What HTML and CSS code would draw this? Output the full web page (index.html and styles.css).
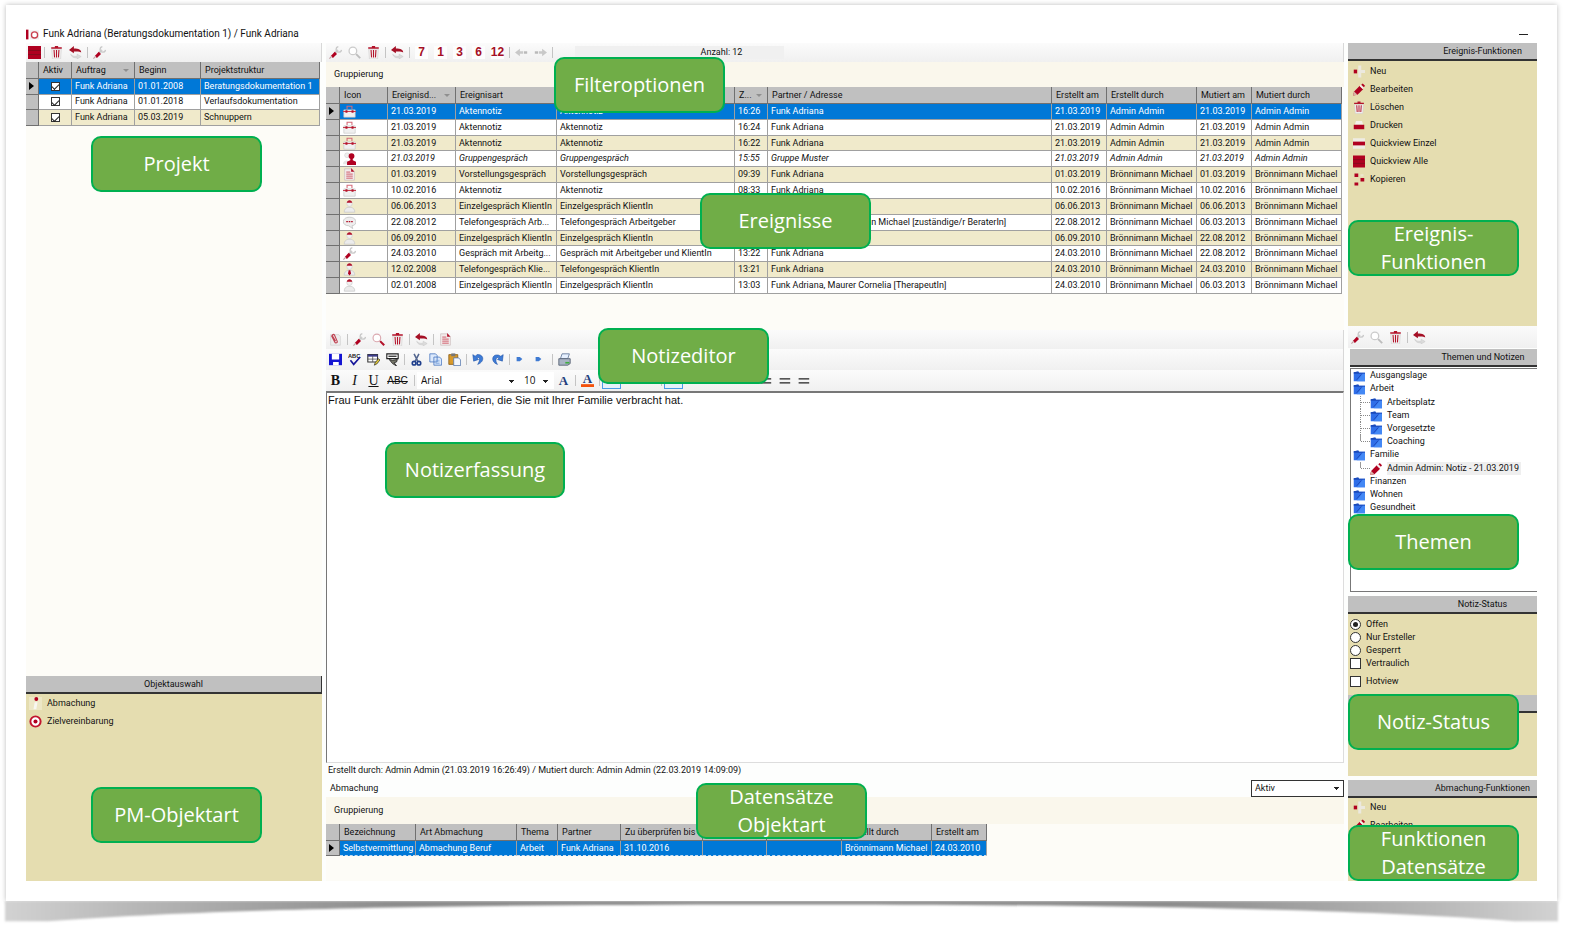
FILE: index.html
```html
<!DOCTYPE html>
<html lang="de">
<head>
<meta charset="utf-8">
<title>Funk Adriana (Beratungsdokumentation 1) / Funk Adriana</title>
<link rel="stylesheet" href="styles.css">
</head>
<body>
<svg class="defs" aria-hidden="true">
  <symbol id="i-list" viewBox="0 0 16 16"><path d="M0 0h16v16H0z" fill="#b00020"/><path d="M0 5.500h16M0 10.500h16" stroke="#7c0e1c" stroke-width="1"/></symbol>
  <symbol id="i-trash" viewBox="0 0 16 16"><path d="M2 4h12l-1 12H3z" fill="#f1eeee" stroke="#c9c9c9" stroke-width=".6"/><path d="M1.500 2.500h13M6 1h4" stroke="#b3122a" stroke-width="1.800"/><path d="M5 5l.6 9M8 5v9M11 5l-.6 9" stroke="#b3122a" stroke-width="1.300"/></symbol>
  <symbol id="i-undo" viewBox="0 0 16 16"><path d="M0 5l6-5v3c6 0 9 1.500 9 5C13 6.500 10 6.500 6 6.800V9z" fill="#a50f25"/><path d="M2 10c2 2.500 5 3 8 2.500V10l5 3-5 3v-1.500C6 15 3 13.500 2 10z" fill="#dcdcdc" stroke="#c2c2c2" stroke-width=".5"/></symbol>
  <symbol id="i-wrench" viewBox="0 0 16 16"><path d="M6 10l5-5" stroke="#cfcfcf" stroke-width="2.600"/><path d="M11.500 .8a3.400 3.400 0 1 0 4 4" fill="none" stroke="#c9c9c9" stroke-width="1.700"/><path d="M3.500 13.500l5-5" stroke="#b00020" stroke-width="3.800"/><path d="M.5 15.500l3-3" stroke="#c4a0a5" stroke-width="1.500"/></symbol>
  <symbol id="i-search" viewBox="0 0 16 16"><circle cx="6" cy="6" r="4.700" fill="#fff" stroke="#cbcbcb" stroke-width="1.600"/><path d="M10 10l5 5" stroke="#bdbdbd" stroke-width="2.300"/></symbol>
  <symbol id="i-search-red" viewBox="0 0 16 16"><circle cx="6" cy="6" r="4.700" fill="#fff" stroke="#dba9b0" stroke-width="1.400"/><path d="M10 10l5 5" stroke="#b3122a" stroke-width="2.600"/></symbol>
  <symbol id="i-left" viewBox="0 0 16 16"><path d="M0 8l6-4.500v3h4v3H6v3z" fill="#c8c8c8"/><path d="M11 6.500h4v3h-4z" fill="#b9b9b9"/></symbol>
  <symbol id="i-right" viewBox="0 0 16 16"><path d="M16 8l-6-4.500v3H6v3h4v3z" fill="#c8c8c8"/><path d="M1 6.500h4v3H1z" fill="#b9b9b9"/></symbol>
  <symbol id="i-case" viewBox="0 0 16 16"><path d="M1 6h14v9H1z" fill="#f0f0f0" stroke="#c6c6c6" stroke-width=".8"/><path d="M5 5V1.500h6V5" fill="none" stroke="#d56a78" stroke-width="1.300"/><path d="M0 8h16" stroke="#c93a4d" stroke-width="1.300"/><path d="M3 6.500h2.500v3H3zM10.500 6.500H13v3h-2.500z" fill="#b3122a"/></symbol>
  <symbol id="i-group" viewBox="0 0 16 16"><circle cx="5" cy="4" r="3" fill="#eee" stroke="#ccc" stroke-width=".6"/><path d="M0 15c0-6 8-6 9 0z" fill="#e6e6e6"/><circle cx="10.500" cy="5" r="3.600" fill="#b00020"/><path d="M9 7h3v3l4 2v4H5v-4l4-2z" fill="#b00020"/></symbol>
  <symbol id="i-doc" viewBox="0 0 16 16"><path d="M2 1h8.500L14 4.500V15H2z" fill="#f3ecec" stroke="#c9b9b9" stroke-width=".8"/><path d="M10 0l4 4.500h-4z" fill="#b3122a"/><path d="M4 5h5M4 7.500h8M4 10h8M4 12.500h8" stroke="#cf5a69" stroke-width="1.200"/></symbol>
  <symbol id="i-person" viewBox="0 0 16 16"><circle cx="8" cy="4.500" r="3.400" fill="#f1f1f1" stroke="#cecece" stroke-width=".8"/><path d="M4.600 3.500C5-.8 11-.8 11.400 3.500z" fill="#b3122a"/><path d="M1.500 15c0-4 2-5 4.500-6h4c2.500 1 4.500 2 4.500 6z" fill="#ececec" stroke="#c4c4c4" stroke-width=".8"/></symbol>
  <symbol id="i-tie" viewBox="0 0 16 16"><use href="#i-person"/><path d="M7 9h2l.8 4L8 15.500 6.200 13z" fill="#b00020"/></symbol>
  <symbol id="i-chat" viewBox="0 0 16 16"><path d="M8 1.500c10 0 10 10 3 10.500L12 15.500 7 12C-2 12-2 1.500 8 1.500z" fill="#eee" stroke="#c4c4c4" stroke-width="1"/><path d="M4 7h2M7 7h2M10 7h2" stroke="#b3122a" stroke-width="1.400"/></symbol>
  <symbol id="i-plus" viewBox="0 0 16 16"><path d="M7 0h4v6h5v4h-5v6H7z" fill="#ece9df"/><path d="M1 5.500h4.500v5H1z" fill="#b00020"/></symbol>
  <symbol id="i-pencil" viewBox="0 0 16 16"><path d="M0 16l1.500-5.500L9 3l4.500 4.500L6 15z" fill="#b00020"/><path d="M0 16l1.500-5.500 4.500 4.500z" fill="#d9b3a6"/><path d="M9.500 2.500l4 4" stroke="#f5f0f0" stroke-width="2"/><path d="M11 1.500L13 0l3 3-1.500 2z" fill="#b00020"/></symbol>
  <symbol id="i-print" viewBox="0 0 16 16"><path d="M4 2h8l1.500 5h-11z" fill="#f3f1ea"/><path d="M1 7h14v6H1z" fill="#b00020"/></symbol>
  <symbol id="i-single" viewBox="0 0 16 16"><path d="M0 1h16v14H0z" fill="#efece4"/><path d="M0 5.500h16v5H0z" fill="#b00020"/></symbol>
  <symbol id="i-copy" viewBox="0 0 16 16"><path d="M2 0h5v4.500H2zM10 6h5v4.500h-5zM2 12h5v4H2z" fill="#b00020"/><path d="M10 1h4v3h-4z" fill="#ece7cf"/></symbol>
  <symbol id="i-info" viewBox="0 0 16 16"><circle cx="9" cy="2.500" r="2.400" fill="#b00020"/><path d="M7 6.500h3.500L9 15H5.500z" fill="#f8f7f2"/></symbol>
  <symbol id="i-target" viewBox="0 0 16 16"><circle cx="8" cy="8" r="6.300" fill="#fff" stroke="#c2152e" stroke-width="2.400"/><circle cx="8" cy="8" r="2.500" fill="#b00020"/></symbol>
  <symbol id="i-clip" viewBox="0 0 16 16"><path d="M2 2h10l2 2v11H2z" fill="#eee" stroke="#c9c9c9" stroke-width=".7"/><path d="M3 3l4 8c1 2 4 1 3-1L7 3C6 1 3.500 1.500 4.500 4L8 10" fill="none" stroke="#c04353" stroke-width="1.400"/></symbol>
  <symbol id="i-save" viewBox="0 0 16 16"><path d="M0 1h16v14H0z" fill="#1414d2"/><path d="M3.500 1h9v7h-9zM5 11h7v4H5z" fill="#fff"/></symbol>
  <symbol id="i-spell" viewBox="0 0 16 16"><text x="0" y="6" class="g-abc">ABC</text><path d="M3 9l4 5 8-9" fill="none" stroke="#16169a" stroke-width="2"/></symbol>
  <symbol id="i-form" viewBox="0 0 16 16"><path d="M1 2h12v9H1z" fill="#fff" stroke="#333" stroke-width="1.300"/><path d="M1 2h12v2.500H1z" fill="#3c3c8c"/><path d="M1 7.500h12M7 4v7" stroke="#444" stroke-width=".9"/><path d="M9 15l1-3 4-5 2 1.500-4 5z" fill="#e8cf3a" stroke="#222" stroke-width=".8"/></symbol>
  <symbol id="i-stamp" viewBox="0 0 16 16"><path d="M1 1h14v6H1z" fill="#fff" stroke="#222" stroke-width="1.400"/><path d="M3 4h10" stroke="#222" stroke-width="1.500"/><path d="M4 8l4 1 6-1-1 3-3 1 3 4-5-3z" fill="#77786a" stroke="#222"/></symbol>
  <symbol id="i-cut" viewBox="0 0 16 16"><path d="M5 1l5 10M11 1L6 11" stroke="#54678f" stroke-width="1.900"/><circle cx="5" cy="12.500" r="2.200" fill="none" stroke="#1f3f8c" stroke-width="2"/><circle cx="11" cy="12.500" r="2.200" fill="none" stroke="#1f3f8c" stroke-width="2"/></symbol>
  <symbol id="i-copies" viewBox="0 0 16 16"><path d="M1 1h7l2 2v8H1zM6 5h7l2.500 2.500V15H6z" fill="#dce9fb" stroke="#4a78c0" stroke-width="1"/><path d="M8 9h5M8 11h5M8 13h5" stroke="#6f9ad8" stroke-width=".8"/></symbol>
  <symbol id="i-paste" viewBox="0 0 16 16"><path d="M1 2h11v12H1z" fill="#d99a2b" stroke="#8b5c12"/><path d="M4 .5h5V4H4z" fill="#777"/><path d="M7 6h6l2.500 2.500V15.500H7z" fill="#f2f6fd" stroke="#5576ad"/></symbol>
  <symbol id="i-undo-b" viewBox="0 0 16 16"><path d="M1 2l1 8 6-2-2-2c3-2 5 2 1 8 9-3 8-13-1-12L4 4z" fill="#3d7bd6" stroke="#1d4fa5" stroke-width=".7"/></symbol>
  <symbol id="i-redo-b" viewBox="0 0 16 16"><path d="M15 2l-1 8-6-2 2-2c-3-2-6 3-2 8C0 12 0 1 9 2.500L12 4z" fill="#3d7bd6" stroke="#1d4fa5" stroke-width=".7"/></symbol>
  <symbol id="i-dot" viewBox="0 0 16 16"><path d="M2 5h4l3 2.500-3 2.500H2z" fill="#3f7ad2"/></symbol>
  <symbol id="i-printer" viewBox="0 0 16 16"><path d="M5 1h9l-2 6H3z" fill="#e6f0ff" stroke="#5d7395"/><path d="M1 7h14v6l-3 2H1z" fill="#a9b4c4" stroke="#4d596b"/><path d="M9 11h5v2H9z" fill="#3fae3f"/></symbol>
  <symbol id="i-font" viewBox="0 0 16 16"><text x="8" y="14" class="g-a">A</text></symbol>
  <symbol id="i-color" viewBox="0 0 16 16"><text x="8" y="11" class="g-a">A</text><path d="M0 12.500h16V16H0z" fill="#f4510b"/></symbol>
  <symbol id="i-lines" viewBox="0 0 16 16"><path d="M2 6h13M2 11h13" stroke="#222" stroke-width="1.400"/></symbol>
  <symbol id="i-folder" viewBox="0 0 16 16"><path d="M1 3l6-1 1 1.500h8V15H1z" fill="#2f6ee8"/><path d="M1 3l6-1 1 1.500h8V5H1z" fill="#1b49b8"/><path d="M5 15L13 5h3v10z" fill="#4388f5"/><path d="M5 13l6-7" stroke="#173fae" stroke-width="1"/></symbol>
  <symbol id="i-app" viewBox="0 0 16 16"><path d="M0 2h3v12H0z" fill="#b00020"/><path d="M5 3h11v11H5z" fill="#eee"/><circle cx="10.500" cy="8.500" r="3.800" fill="#fff" stroke="#c9404f" stroke-width="1.600"/></symbol>
</svg>

<main class="sheet">
  <svg class="curl" viewBox="0 0 1000 30" preserveAspectRatio="none" aria-hidden="true">
    <defs>
      <linearGradient id="fade"><stop offset="0" stop-color="#d2d2d2"/><stop offset=".08" stop-color="#b8b8b8"/><stop offset=".25" stop-color="#8c8c8c"/><stop offset=".75" stop-color="#8c8c8c"/><stop offset=".92" stop-color="#b8b8b8"/><stop offset="1" stop-color="#d2d2d2"/></linearGradient>
    </defs>
    <path d="M0 0H1000V21H972C880 9 720 3.500 500 3.500S120 9 28 21H0z" fill="url(#fade)"/>
  </svg>
  <header class="title">
    <svg class="ico"><use href="#i-app"/></svg>
    <h1>Funk Adriana (Beratungsdokumentation 1) / Funk Adriana</h1>
    <button class="minimize" aria-label="Minimieren"></button>
  </header>

  <div class="app">
    <section class="col left">
      <div class="toolbar">
        <button class="first" aria-label="Liste"><svg class="ico"><use href="#i-list"/></svg></button><i class="sep"></i>
        <button aria-label="Löschen"><svg class="ico"><use href="#i-trash"/></svg></button>
        <button aria-label="Zurück"><svg class="ico"><use href="#i-undo"/></svg></button><i class="sep"></i>
        <button aria-label="Werkzeug"><svg class="ico"><use href="#i-wrench"/></svg></button>
      </div>
      <table class="grid projects">
        <colgroup><col class="w-sel"><col class="w-33"><col class="w-63"><col class="w-66"><col></colgroup>
        <thead><tr><th></th><th>Aktiv</th><th class="sorted">Auftrag</th><th>Beginn</th><th>Projektstruktur</th></tr></thead>
        <tbody>
          <tr class="on"><td class="cur"></td><td class="mid"><input type="checkbox" checked aria-label="Aktiv 1"></td><td>Funk Adriana</td><td>01.01.2008</td><td>Beratungsdokumentation 1</td></tr>
          <tr><td></td><td class="mid"><input type="checkbox" checked aria-label="Aktiv 2"></td><td>Funk Adriana</td><td>01.01.2018</td><td>Verlaufsdokumentation</td></tr>
          <tr><td></td><td class="mid"><input type="checkbox" checked aria-label="Aktiv 3"></td><td>Funk Adriana</td><td>05.03.2019</td><td>Schnuppern</td></tr>
        </tbody>
      </table>
      <div class="blank grow"></div>
      <h2 class="bar plain">Objektauswahl</h2>
      <div class="tan objects">
        <button class="item picked"><svg class="ico"><use href="#i-info"/></svg>Abmachung</button>
        <button class="item"><svg class="ico"><use href="#i-target"/></svg>Zielvereinbarung</button>
      </div>
      <div class="note n-projekt">Projekt</div>
      <div class="note n-pm">PM-Objektart</div>
    </section>

    <section class="col center">
      <div class="toolbar">
        <button aria-label="Werkzeug"><svg class="ico"><use href="#i-wrench"/></svg></button>
        <button aria-label="Suchen"><svg class="ico"><use href="#i-search"/></svg></button>
        <button aria-label="Löschen"><svg class="ico"><use href="#i-trash"/></svg></button><i class="sep"></i>
        <button aria-label="Zurück"><svg class="ico"><use href="#i-undo"/></svg></button><i class="sep"></i>
        <button class="num"><b>7</b></button><button class="num"><b>1</b></button><button class="num"><b>3</b></button><button class="num"><b>6</b></button><button class="num"><b>12</b></button><i class="sep"></i>
        <button aria-label="Vorherige"><svg class="ico"><use href="#i-left"/></svg></button>
        <button aria-label="Nächste"><svg class="ico"><use href="#i-right"/></svg></button><i class="sep"></i>
        <span class="count">Anzahl: 12</span>
      </div>
      <div class="band">Gruppierung</div>
      <table class="grid events">
        <colgroup><col class="w-14"><col class="w-48"><col class="w-68"><col class="w-101"><col class="w-178"><col class="w-33"><col><col class="w-55"><col class="w-90"><col class="w-55"><col class="w-90"></colgroup>
        <thead><tr><th></th><th>Icon</th><th class="sorted">Ereignisd...</th><th>Ereignisart</th><th></th><th class="sorted">Z...</th><th>Partner / Adresse</th><th>Erstellt am</th><th>Erstellt durch</th><th>Mutiert am</th><th>Mutiert durch</th></tr></thead>
        <tbody>
          <tr class="on"><td class="cur"></td><td><svg class="ico"><use href="#i-case"/></svg></td><td>21.03.2019</td><td>Aktennotiz</td><td>Aktennotiz</td><td>16:26</td><td>Funk Adriana</td><td>21.03.2019</td><td>Admin Admin</td><td>21.03.2019</td><td>Admin Admin</td></tr>
          <tr><td></td><td><svg class="ico"><use href="#i-case"/></svg></td><td>21.03.2019</td><td>Aktennotiz</td><td>Aktennotiz</td><td>16:24</td><td>Funk Adriana</td><td>21.03.2019</td><td>Admin Admin</td><td>21.03.2019</td><td>Admin Admin</td></tr>
          <tr><td></td><td><svg class="ico"><use href="#i-case"/></svg></td><td>21.03.2019</td><td>Aktennotiz</td><td>Aktennotiz</td><td>16:22</td><td>Funk Adriana</td><td>21.03.2019</td><td>Admin Admin</td><td>21.03.2019</td><td>Admin Admin</td></tr>
          <tr class="it"><td></td><td><svg class="ico"><use href="#i-group"/></svg></td><td>21.03.2019</td><td>Gruppengespräch</td><td>Gruppengespräch</td><td>15:55</td><td>Gruppe Muster</td><td>21.03.2019</td><td>Admin Admin</td><td>21.03.2019</td><td>Admin Admin</td></tr>
          <tr><td></td><td><svg class="ico"><use href="#i-doc"/></svg></td><td>01.03.2019</td><td>Vorstellungsgespräch</td><td>Vorstellungsgespräch</td><td>09:39</td><td>Funk Adriana</td><td>01.03.2019</td><td>Brönnimann Michael</td><td>01.03.2019</td><td>Brönnimann Michael</td></tr>
          <tr><td></td><td><svg class="ico"><use href="#i-case"/></svg></td><td>10.02.2016</td><td>Aktennotiz</td><td>Aktennotiz</td><td>08:33</td><td>Funk Adriana</td><td>10.02.2016</td><td>Brönnimann Michael</td><td>10.02.2016</td><td>Brönnimann Michael</td></tr>
          <tr><td></td><td><svg class="ico"><use href="#i-person"/></svg></td><td>06.06.2013</td><td>Einzelgespräch KlientIn</td><td>Einzelgespräch KlientIn</td><td></td><td></td><td>06.06.2013</td><td>Brönnimann Michael</td><td>06.06.2013</td><td>Brönnimann Michael</td></tr>
          <tr><td></td><td><svg class="ico"><use href="#i-chat"/></svg></td><td>22.08.2012</td><td>Telefongespräch Arb...</td><td>Telefongespräch Arbeitgeber</td><td></td><td>Funk Adriana, Brönnimann Michael [zuständige/r BeraterIn]</td><td>22.08.2012</td><td>Brönnimann Michael</td><td>06.03.2013</td><td>Brönnimann Michael</td></tr>
          <tr><td></td><td><svg class="ico"><use href="#i-person"/></svg></td><td>06.09.2010</td><td>Einzelgespräch KlientIn</td><td>Einzelgespräch KlientIn</td><td></td><td></td><td>06.09.2010</td><td>Brönnimann Michael</td><td>22.08.2012</td><td>Brönnimann Michael</td></tr>
          <tr><td></td><td><svg class="ico"><use href="#i-wrench"/></svg></td><td>24.03.2010</td><td>Gespräch mit Arbeitg...</td><td>Gespräch mit Arbeitgeber und KlientIn</td><td>13:22</td><td>Funk Adriana</td><td>24.03.2010</td><td>Brönnimann Michael</td><td>22.08.2012</td><td>Brönnimann Michael</td></tr>
          <tr><td></td><td><svg class="ico"><use href="#i-tie"/></svg></td><td>12.02.2008</td><td>Telefongespräch Klie...</td><td>Telefongespräch KlientIn</td><td>13:21</td><td>Funk Adriana</td><td>24.03.2010</td><td>Brönnimann Michael</td><td>24.03.2010</td><td>Brönnimann Michael</td></tr>
          <tr><td></td><td><svg class="ico"><use href="#i-person"/></svg></td><td>02.01.2008</td><td>Einzelgespräch KlientIn</td><td>Einzelgespräch KlientIn</td><td>13:03</td><td>Funk Adriana, Maurer Cornelia [TherapeutIn]</td><td>24.03.2010</td><td>Brönnimann Michael</td><td>06.03.2013</td><td>Brönnimann Michael</td></tr>
        </tbody>
      </table>
      <div class="blank spacer"></div>
      <div class="toolbar">
        <button aria-label="Anhang"><svg class="ico"><use href="#i-clip"/></svg></button><i class="sep"></i>
        <button aria-label="Werkzeug"><svg class="ico"><use href="#i-wrench"/></svg></button>
        <button aria-label="Suchen"><svg class="ico"><use href="#i-search-red"/></svg></button>
        <button aria-label="Löschen"><svg class="ico"><use href="#i-trash"/></svg></button><i class="sep"></i>
        <button aria-label="Zurück"><svg class="ico"><use href="#i-undo"/></svg></button><i class="sep"></i>
        <button aria-label="Dokument"><svg class="ico"><use href="#i-doc"/></svg></button>
      </div>
      <div class="toolbar tall">
        <button aria-label="Speichern"><svg class="ico"><use href="#i-save"/></svg></button>
        <button aria-label="Rechtschreibung"><svg class="ico"><use href="#i-spell"/></svg></button>
        <button aria-label="Formular"><svg class="ico"><use href="#i-form"/></svg></button>
        <button aria-label="Stempel"><svg class="ico"><use href="#i-stamp"/></svg></button><i class="sep"></i>
        <button aria-label="Ausschneiden"><svg class="ico"><use href="#i-cut"/></svg></button>
        <button aria-label="Kopieren"><svg class="ico"><use href="#i-copies"/></svg></button>
        <button aria-label="Einfügen"><svg class="ico"><use href="#i-paste"/></svg></button><i class="sep"></i>
        <button aria-label="Rückgängig"><svg class="ico"><use href="#i-undo-b"/></svg></button>
        <button aria-label="Wiederholen"><svg class="ico"><use href="#i-redo-b"/></svg></button><i class="sep"></i>
        <button aria-label="Einzug verkleinern"><svg class="ico"><use href="#i-dot"/></svg></button>
        <button aria-label="Einzug vergrössern"><svg class="ico"><use href="#i-dot"/></svg></button><i class="sep"></i>
        <button aria-label="Drucken"><svg class="ico"><use href="#i-printer"/></svg></button>
      </div>
      <div class="toolbar tall format">
        <button class="f-b">B</button><button class="f-i">I</button><button class="f-u">U</button><button class="f-s">ABC</button><i class="sep"></i>
        <select class="font" aria-label="Schriftart"><option>Arial</option></select>
        <select class="size" aria-label="Schriftgrösse"><option>10</option></select>
        <button aria-label="Schrift"><svg class="ico"><use href="#i-font"/></svg></button><i class="sep"></i>
        <button aria-label="Schriftfarbe"><svg class="ico"><use href="#i-color"/></svg></button><i class="sep"></i>
        <button class="active" aria-label="Linksbündig"><svg class="ico"><use href="#i-lines"/></svg></button>
        <button aria-label="Zentriert"><svg class="ico"><use href="#i-lines"/></svg></button>
        <button aria-label="Rechtsbündig"><svg class="ico"><use href="#i-lines"/></svg></button><i class="sep"></i>
        <button class="active" aria-label="Umbruch"><svg class="ico"><use href="#i-lines"/></svg></button>
        <span class="gap"></span>
        <button aria-label="Abstand 1"><svg class="ico"><use href="#i-lines"/></svg></button>
        <button aria-label="Abstand 2"><svg class="ico"><use href="#i-lines"/></svg></button>
        <button aria-label="Abstand 3"><svg class="ico"><use href="#i-lines"/></svg></button>
      </div>
      <textarea class="editor" aria-label="Notiz">Frau Funk erzählt über die Ferien, die Sie mit Ihrer Familie verbracht hat.</textarea>
      <p class="status">Erstellt durch: Admin Admin (21.03.2019 16:26:49) / Mutiert durch: Admin Admin (22.03.2019 14:09:09)</p>
      <div class="filter"><label for="state">Abmachung</label><select id="state"><option>Aktiv</option></select></div>
      <div class="band low">Gruppierung</div>
      <div class="blank records">
        <table class="grid deals">
          <colgroup><col class="w-14"><col class="w-76"><col class="w-101"><col class="w-41"><col class="w-63"><col class="w-82"><col class="w-64"><col class="w-75"><col class="w-90"><col class="w-55"></colgroup>
          <thead><tr><th></th><th>Bezeichnung</th><th>Art Abmachung</th><th>Thema</th><th>Partner</th><th>Zu überprüfen bis</th><th></th><th></th><th>Erstellt durch</th><th>Erstellt am</th></tr></thead>
          <tbody><tr class="on focus"><td class="cur"></td><td>Selbstvermittlung</td><td>Abmachung Beruf</td><td>Arbeit</td><td>Funk Adriana</td><td>31.10.2016</td><td></td><td></td><td>Brönnimann Michael</td><td>24.03.2010</td></tr></tbody>
        </table>
      </div>
      <div class="note n-filter">Filteroptionen</div>
      <div class="note n-ereignisse">Ereignisse</div>
      <div class="note n-editor">Notizeditor</div>
      <div class="note n-erfassung">Notizerfassung</div>
      <div class="note n-daten">Datensätze Objektart</div>
    </section>

    <section class="col right">
      <h2 class="bar">Ereignis-Funktionen</h2>
      <div class="tan functions">
        <button class="item"><svg class="ico"><use href="#i-plus"/></svg>Neu</button>
        <button class="item"><svg class="ico"><use href="#i-pencil"/></svg>Bearbeiten</button>
        <button class="item"><svg class="ico"><use href="#i-trash"/></svg>Löschen</button>
        <button class="item"><svg class="ico"><use href="#i-print"/></svg>Drucken</button>
        <button class="item"><svg class="ico"><use href="#i-single"/></svg>Quickview Einzel</button>
        <button class="item"><svg class="ico"><use href="#i-list"/></svg>Quickview Alle</button>
        <button class="item"><svg class="ico"><use href="#i-copy"/></svg>Kopieren</button>
      </div>
      <div class="toolbar topics-tools">
        <button aria-label="Werkzeug"><svg class="ico"><use href="#i-wrench"/></svg></button>
        <button aria-label="Suchen"><svg class="ico"><use href="#i-search"/></svg></button>
        <button aria-label="Löschen"><svg class="ico"><use href="#i-trash"/></svg></button><i class="sep"></i>
        <button aria-label="Zurück"><svg class="ico"><use href="#i-undo"/></svg></button>
      </div>
      <div class="topics grow">
        <h2 class="bar">Themen und Notizen</h2>
        <ul class="tree">
          <li><span><svg class="ico"><use href="#i-folder"/></svg>Ausgangslage</span></li>
          <li><span><svg class="ico"><use href="#i-folder"/></svg>Arbeit</span>
            <ul>
              <li><span><svg class="ico"><use href="#i-folder"/></svg>Arbeitsplatz</span></li>
              <li><span><svg class="ico"><use href="#i-folder"/></svg>Team</span></li>
              <li><span><svg class="ico"><use href="#i-folder"/></svg>Vorgesetzte</span></li>
              <li><span><svg class="ico"><use href="#i-folder"/></svg>Coaching</span></li>
            </ul></li>
          <li><span><svg class="ico"><use href="#i-folder"/></svg>Familie</span>
            <ul><li><span><svg class="ico"><use href="#i-pencil"/></svg><mark>Admin Admin: Notiz - 21.03.2019</mark></span></li></ul></li>
          <li><span><svg class="ico"><use href="#i-folder"/></svg>Finanzen</span></li>
          <li><span><svg class="ico"><use href="#i-folder"/></svg>Wohnen</span></li>
          <li><span><svg class="ico"><use href="#i-folder"/></svg>Gesundheit</span></li>
        </ul>
      </div>
      <h2 class="bar">Notiz-Status</h2>
      <div class="tan state">
        <label><input type="radio" name="st" checked>Offen</label>
        <label><input type="radio" name="st">Nur Ersteller</label>
        <label><input type="radio" name="st">Gesperrt</label>
        <label><input type="checkbox">Vertraulich</label>
        <label class="apart"><input type="checkbox">Hotview</label>
      </div>
      <h2 class="bar"></h2>
      <div class="tan empty"></div>
      <h2 class="bar">Abmachung-Funktionen</h2>
      <div class="tan deal-functions">
        <button class="item"><svg class="ico"><use href="#i-plus"/></svg>Neu</button>
        <button class="item"><svg class="ico"><use href="#i-pencil"/></svg>Bearbeiten</button>
      </div>
      <div class="note n-funktionen">Ereignis-Funktionen</div>
      <div class="note n-themen">Themen</div>
      <div class="note n-status">Notiz-Status</div>
      <div class="note n-records">Funktionen Datensätze</div>
    </section>
  </div>
</main>
</body>
</html>
```
FILE: styles.css
```css
* { box-sizing: border-box; }

body {
  margin: 0;
  min-height: 100vh;
  padding: 5px 14px 29px 6px;
  display: flex;
  background: #fff;
  color: #111;
  font: 9px/13px Roboto, "Liberation Sans", Arial, sans-serif;
}

h1, h2, p, ul { margin: 0; padding: 0; font: inherit; }
ul { list-style: none; }
button, select, input, textarea { font: inherit; color: inherit; margin: 0; }
button { border: 0; padding: 0; background: none; }
.defs { display: none; }
.ico { width: 13px; height: 13px; flex: none; display: block; }
.g-abc { font: bold 7px "Liberation Sans", sans-serif; fill: #222; }
.g-a { font: bold 16px "Liberation Serif", serif; fill: #1f3f7d; text-anchor: middle; }

.sheet {
  flex: 1;
  min-width: 0;
  position: relative;
  display: flex;
  flex-direction: column;
  padding: 20px;
  background: #fff;
  box-shadow: 0 0 5px #bbb;
}
.curl {
  position: absolute;
  top: 100%;
  left: -1px;
  width: calc(100% + 2px);
  height: 29px;
  filter: blur(1px);
  clip-path: inset(0 -4px -4px);
}

.title { display: flex; align-items: center; gap: 4px; height: 18px; }
.title h1 { flex: 1; font: 10px/18px Roboto, "Noto Sans", sans-serif; }
.minimize { width: 9px; height: 1px; margin-right: 9px; background: #222; }

.app {
  flex: 1;
  display: grid;
  grid-template-columns: 296px minmax(0, 1fr) 189px;
  gap: 4px;
  background: #fdfefd;
}
.col { position: relative; display: flex; flex-direction: column; min-width: 0; }
.grow { flex: 1; }
.blank { background: #fdfcf7; }

.toolbar {
  display: flex;
  align-items: center;
  height: 19px;
  background: linear-gradient(#fbfbfb, #f0f0f0);
  border-right: 1px solid #d8d8d8;
}
.toolbar.tall { height: 21px; }
.toolbar button { width: 19px; height: 17px; display: flex; align-items: center; justify-content: center; }
.toolbar .first { width: 16px; }
.sep { width: 1px; height: 11px; margin: 0 2px; background: #c4c4c4; }
.num b {
  min-width: 13px;
  background: #fdfdfd;
  color: #a50f25;
  font: bold 12px/13px "Liberation Sans", Arial, sans-serif;
  text-align: center;
}
.count { width: 209px; margin-left: 20px; text-align: center; padding-left: 84px; background: #f0f0f0; }

.format button { font: 14px/16px "Liberation Serif", serif; }
.format .f-b { font-weight: bold; }
.format .f-i { font-style: italic; }
.format .f-u { text-decoration: underline; }
.format .f-s { width: 29px; font: 10px/13px "Liberation Sans", sans-serif; text-decoration: line-through; }
.format select {
  appearance: none;
  height: 17px;
  border: 0;
  padding: 0 4px;
  background: linear-gradient(#222, #222) right 6px center / 5px 1px no-repeat,
    linear-gradient(#222, #222) right 7px top 9px / 3px 1px no-repeat,
    linear-gradient(#222, #222) right 8px top 10px / 1px 1px no-repeat, #fff;
  font: 10px/17px "Open Sans", sans-serif;
}
.format .font { width: 103px; }
.format .size { width: 34px; }
.format .active { border: 1px solid #4a9be6; background: #e6f1fb; }
.format .gap { width: 73px; }

.band { height: 25px; padding: 6px 8px; background: #faf7ec; }
.band.low { height: 27px; padding-top: 7px; }

.grid { width: 100%; table-layout: fixed; border-collapse: separate; border-spacing: 0; background: #fff; }
.projects { width: 294px; }
.deals { width: 661px; }
.w-sel { width: 13px; } .w-14 { width: 14px; } .w-33 { width: 33px; } .w-41 { width: 41px; }
.w-48 { width: 48px; } .w-55 { width: 55px; } .w-63 { width: 63px; } .w-64 { width: 64px; }
.w-66 { width: 66px; } .w-68 { width: 68px; } .w-75 { width: 75px; } .w-76 { width: 76px; }
.w-82 { width: 82px; } .w-90 { width: 90px; } .w-101 { width: 101px; } .w-178 { width: 178px; }
.projects { height: 64px; }
.events { width: calc(100% - 2px); height: 207px; }
.grid th, .grid td {
  height: 15px;
  padding: 0 0 0 3px;
  border-right: 1px solid #a0a0a0;
  border-bottom: 1px solid #a0a0a0;
  font-weight: normal;
  line-height: 13px;
  text-align: left;
  white-space: nowrap;
  overflow: hidden;
  text-overflow: ellipsis;
}
.grid th { height: 17px; padding-left: 4px; background: #c0c0c0; border-color: #707070; }
.grid tbody tr:nth-child(odd) { background: #f0eacb; }
.grid tbody tr.on { background: #0078d7; color: #fff; }
.grid tbody td:first-child { background: #c0c0c0; border-color: #707070; padding: 0; }
.it { font-style: italic; }
.sorted { position: relative; }
.sorted::after {
  content: "";
  position: absolute;
  right: 5px;
  top: 7px;
  border: 3px solid transparent;
  border-top-color: #8f8f8f;
}
.cur::before {
  content: "";
  display: block;
  width: 0;
  margin-left: 3px;
  border: 4px solid transparent;
  border-left: 5px solid #000;
  border-right: 0;
}
.grid .mid { padding: 0 0 0 12px; }
.focus td + td { border-bottom: 1px dashed #c8dcf0; }

input[type="checkbox"], input[type="radio"] {
  appearance: none;
  flex: none;
  width: 11px;
  height: 11px;
  border: 1px solid #333;
  background: #fff;
  display: grid;
  place-items: center;
}
.grid .mid input { width: 9px; height: 9px; }
input[type="radio"] { border-radius: 50%; }
input[type="radio"]:checked::before { content: ""; width: 5px; height: 5px; border-radius: 50%; background: #222; }
input[type="checkbox"]:checked::before {
  content: "";
  width: 6px;
  height: 3px;
  border: solid #222;
  border-width: 0 0 1px 1px;
  transform: rotate(-45deg);
}

.bar {
  height: 18px;
  padding-left: 80px;
  background: #c0c0c0;
  border-bottom: 2px solid #333;
  line-height: 17px;
  text-align: center;
}
.bar.plain { padding-left: 0; border-right: 1px solid #333; }
.tan { background: #e5ddb0; }
.item { display: flex; align-items: center; gap: 5px; height: 18px; padding-left: 3px; }
.right .item { padding-left: 5px; }
.right .item .ico { width: 12px; }
.objects { height: 187px; }
.objects .picked .ico { background: #ede7c6; }

.spacer { height: 36px; }
.editor {
  flex: 1;
  resize: none;
  border: 0;
  border-top: 2px solid #777;
  border-left: 1px solid #777;
  border-right: 1px solid #ddd;
  border-bottom: 1px solid #ddd;
  outline: 0;
  padding: 1px;
  background: #fff;
  font: 11px/13px "Liberation Sans", Arial, sans-serif;
}
.status { height: 17px; padding: 1px 2px; }
.filter { height: 17px; display: flex; align-items: center; justify-content: space-between; padding-left: 4px; }
.filter select {
  appearance: none;
  width: 93px;
  height: 17px;
  padding: 0 3px;
  border: 1px solid #333;
  background: linear-gradient(#222, #222) right 4px top 6px / 5px 1px no-repeat,
    linear-gradient(#222, #222) right 5px top 7px / 3px 1px no-repeat,
    linear-gradient(#222, #222) right 6px top 8px / 1px 1px no-repeat, #fff;
}
.records { height: 57px; }

.functions { height: 265px; padding-top: 1px; }
.topics-tools { height: 22px; border: 0; }
.topics { display: flex; flex-direction: column; padding: 1px 0 0 2px; margin-bottom: 4px; }
.topics .bar { padding-left: 79px; }
.tree {
  flex: 1;
  margin-top: 1px;
  padding: 0 0 0 2px;
  border: 1px solid #777;
  border-right: 0;
  background: #fff;
}
.tree span { display: flex; align-items: center; gap: 5px; height: 13px; white-space: nowrap; }
.tree .ico { width: 12px; height: 12px; }
.tree mark { background: #efefef; color: inherit; padding-right: 2px; }
.tree ul { padding: 1px 0 0 7px; }
.tree ul li { border-left: 1px dotted #888; }
.tree ul li:last-child { border-image: linear-gradient(#999 50%, transparent 50%) 1; }
.tree ul span::before { content: ""; flex: none; width: 9px; margin-right: -5px; border-top: 1px dotted #888; }
.state { height: 81px; padding: 4px 0 0 2px; }
.state label { display: flex; align-items: center; gap: 5px; height: 13px; }
.state .apart { margin-top: 5px; }
.empty { height: 63px; margin-bottom: 4px; }
.deal-functions { height: 83px; }

.note {
  position: absolute;
  width: 171px;
  height: 56px;
  display: flex;
  align-items: center;
  justify-content: center;
  border: 2px solid #00b050;
  border-radius: 10px;
  background: #70ad47;
  color: #fff;
  font: 20px/28px "Open Sans", "Noto Sans", sans-serif;
  text-align: center;
}
.n-projekt { left: 65px; top: 93px; }
.n-pm { left: 65px; bottom: 38px; }
.n-filter { left: 228px; top: 14px; }
.n-ereignisse { left: 374px; top: 150px; }
.n-editor { left: 272px; top: 285px; }
.n-erfassung { left: 59px; top: 399px; width: 180px; }
.n-daten { left: 370px; bottom: 42px; }
.n-funktionen { left: 0; top: 177px; }
.n-themen { left: 0; top: 471px; }
.n-status { left: 0; top: 651px; }
.n-records { left: 0; bottom: 0; }
```
